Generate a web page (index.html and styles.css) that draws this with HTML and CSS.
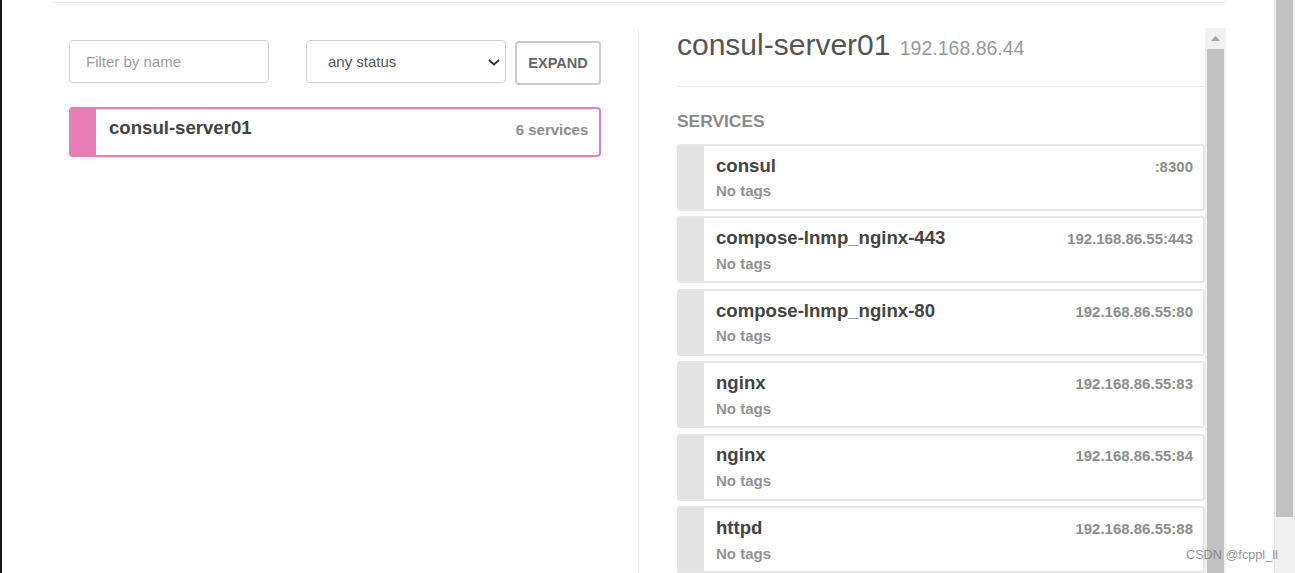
FILE: index.html
```html
<!DOCTYPE html>
<html lang="en">
<head>
<meta charset="utf-8">
<title>Consul UI - Nodes</title>
<link rel="stylesheet" href="styles.css">
</head>
<body>
<div class="screen">
  <div class="edge"></div>
  <div class="page">
    <div class="container">
      <div class="columns">
        <div class="nodes-col">
          <div class="controls">
            <input class="filter" type="text" placeholder="Filter by name">
            <div class="select-wrap">
              <select class="status">
                <option>any status</option>
              </select>
              <svg class="chev" width="12" height="7" viewBox="0 0 12 7"><path d="M1 1 L6 5.5 L11 1" fill="none" stroke="#333" stroke-width="1.8"/></svg>
            </div>
            <button class="expand">EXPAND</button>
          </div>
          <div class="node-card">
            <div class="node-bar"></div>
            <div class="node-body">
              <span class="node-name">consul-server01</span>
              <span class="node-count">6 services</span>
            </div>
          </div>
        </div>
        <div class="detail-col">
          <div class="detail-body">
            <h3 class="detail-title">consul-server01 <small class="detail-ip">192.168.86.44</small></h3>
            <hr class="rule">
            <h4 class="section-title">SERVICES</h4>
            <div class="svc-list">
              <div class="svc">
                <div class="svc-bar"></div>
                <div class="svc-body">
                  <div class="svc-row"><span class="svc-name">consul</span><span class="svc-addr">:8300</span></div>
                  <div class="svc-tags">No tags</div>
                </div>
              </div>
              <div class="svc">
                <div class="svc-bar"></div>
                <div class="svc-body">
                  <div class="svc-row"><span class="svc-name">compose-lnmp_nginx-443</span><span class="svc-addr">192.168.86.55:443</span></div>
                  <div class="svc-tags">No tags</div>
                </div>
              </div>
              <div class="svc">
                <div class="svc-bar"></div>
                <div class="svc-body">
                  <div class="svc-row"><span class="svc-name">compose-lnmp_nginx-80</span><span class="svc-addr">192.168.86.55:80</span></div>
                  <div class="svc-tags">No tags</div>
                </div>
              </div>
              <div class="svc">
                <div class="svc-bar"></div>
                <div class="svc-body">
                  <div class="svc-row"><span class="svc-name">nginx</span><span class="svc-addr">192.168.86.55:83</span></div>
                  <div class="svc-tags">No tags</div>
                </div>
              </div>
              <div class="svc">
                <div class="svc-bar"></div>
                <div class="svc-body">
                  <div class="svc-row"><span class="svc-name">nginx</span><span class="svc-addr">192.168.86.55:84</span></div>
                  <div class="svc-tags">No tags</div>
                </div>
              </div>
              <div class="svc">
                <div class="svc-bar"></div>
                <div class="svc-body">
                  <div class="svc-row"><span class="svc-name">httpd</span><span class="svc-addr">192.168.86.55:88</span></div>
                  <div class="svc-tags">No tags</div>
                </div>
              </div>
            </div>
          </div>
          <div class="vscroll">
            <div class="vscroll-arrow"><svg width="9" height="5" viewBox="0 0 9 5"><path d="M0 5 L4.5 0 L9 5 Z" fill="#a3a3a3"/></svg></div>
            <div class="vscroll-thumb"></div>
          </div>
        </div>
      </div>
    </div>
  </div>
  <div class="outer-scroll">
    <div class="outer-thumb"></div>
  </div>
  <div class="watermark">CSDN @fcppl_ll</div>
</div>
</body>
</html>
```

FILE: styles.css
```css
html, body {
  margin: 0;
  padding: 0;
  height: 573px;
  overflow: hidden;
  background: #fff;
}
body {
  font-family: "Liberation Sans", Arial, sans-serif;
  color: #444;
}
.screen {
  display: flex;
  height: 573px;
  position: relative;
}
.edge {
  width: 2px;
  background: #1b1b1b;
  flex: none;
}
.page {
  flex: 1;
  padding-left: 49px;
  overflow: hidden;
}
.container {
  width: 1175px;
  margin-top: 2px;
  border-top: 1px solid #ececec;
  height: 570px;
}
.columns {
  display: flex;
  height: 100%;
}
.nodes-col {
  width: 532px;
  padding: 37px 37px 0 18px;
  flex: none;
}
.controls {
  display: flex;
  align-items: flex-start;
}
.filter {
  box-sizing: border-box;
  width: 200px;
  height: 43px;
  border: 1px solid #cfcfcf;
  border-radius: 4px;
  padding: 0 0 0 16px;
  font-family: "Liberation Sans", Arial, sans-serif;
  font-size: 15px;
  color: #555;
  outline: none;
}
.filter::placeholder {
  color: #9d9d9d;
}
.select-wrap {
  position: relative;
  margin-left: 37px;
}
.status {
  box-sizing: border-box;
  width: 200px;
  height: 42.5px;
  -webkit-appearance: none;
  appearance: none;
  border: 1px solid #cfcfcf;
  border-radius: 4px;
  background: #fff;
  padding: 0 0 0 21px;
  font-family: "Liberation Sans", Arial, sans-serif;
  font-size: 15px;
  color: #555;
  outline: none;
}
.chev {
  position: absolute;
  left: 182px;
  top: 18.5px;
  pointer-events: none;
}
.expand {
  box-sizing: border-box;
  margin-left: 9px;
  margin-top: 1px;
  width: 86px;
  height: 44px;
  border: 2px solid #cbcbcb;
  border-radius: 4px;
  background: #fff;
  font-family: "Liberation Sans", Arial, sans-serif;
  font-weight: bold;
  font-size: 14.5px;
  color: #666;
  padding: 0;
}
.node-card {
  margin-top: 22px;
  display: flex;
  border: 2px solid #e67db4;
  border-radius: 4px;
}
.node-bar {
  width: 25px;
  background: #e67db4;
  flex: none;
}
.node-body {
  flex: 1;
  display: flex;
  justify-content: space-between;
  align-items: baseline;
  padding: 9.3px 10.7px 16px 13px;
}
.node-name {
  font-size: 18.6px;
  font-weight: bold;
  line-height: 20px;
  color: #444;
}
.node-count {
  font-size: 15px;
  font-weight: bold;
  color: #8d8d8d;
  line-height: 20px;
  position: relative;
  top: 1px;
}
.detail-col {
  flex: 1;
  margin-top: 25px;
  border-left: 1px solid #ececec;
  display: flex;
  overflow: hidden;
}
.detail-body {
  flex: 1;
  padding-left: 38px;
  overflow: hidden;
}
.detail-title {
  margin: 0;
  font-size: 30px;
  font-weight: normal;
  line-height: 33px;
  height: 33px;
  color: #555;
  white-space: nowrap;
}
.detail-ip {
  font-size: 19.5px;
  line-height: 20px;
  color: #999;
  margin-left: 1px;
}
.rule {
  margin: 25px 0 0 0;
  border: none;
  border-top: 1px solid #eee;
  height: 0;
}
.section-title {
  margin: 23.5px 0 0 0;
  font-size: 17.4px;
  font-weight: bold;
  line-height: 20px;
  color: #8a8a8a;
}
.svc-list {
  margin-top: 13.5px;
  display: flex;
  flex-direction: column;
  gap: 5.8px;
}
.svc {
  display: flex;
  border: 2px solid #e6e6e6;
  border-radius: 3px;
  flex: none;
}
.svc-bar {
  width: 25px;
  background: #e3e3e3;
  flex: none;
}
.svc-body {
  flex: 1;
  padding: 9.6px 10px 8.2px 12px;
}
.svc-row {
  display: flex;
  justify-content: space-between;
  align-items: baseline;
}
.svc-name {
  font-size: 18.6px;
  font-weight: bold;
  line-height: 20px;
  color: #444;
}
.svc-addr {
  font-size: 15px;
  font-weight: bold;
  line-height: 20px;
  color: #8d8d8d;
}
.svc-tags {
  margin-top: 5.9px;
  font-size: 15px;
  font-weight: bold;
  line-height: 18px;
  color: #929292;
}
.vscroll {
  width: 21px;
  flex: none;
  background: #f1f1f1;
  display: flex;
  flex-direction: column;
}
.vscroll-arrow {
  height: 21px;
  display: flex;
  align-items: center;
  justify-content: center;
}
.vscroll-thumb {
  flex: 1;
  margin: 0 2px;
  background: #c1c1c1;
}
.outer-scroll {
  width: 21px;
  flex: none;
  background: #f1f1f1;
  border-left: 1px solid #e4e4e4;
  box-sizing: border-box;
}
.outer-thumb {
  height: 517px;
  margin: 0 2px 0 1px;
  background: #c1c1c1;
}
.watermark {
  position: absolute;
  left: 1186px;
  top: 548px;
  font-size: 12.7px;
  color: rgba(120, 120, 120, 0.8);
  white-space: nowrap;
}
```
